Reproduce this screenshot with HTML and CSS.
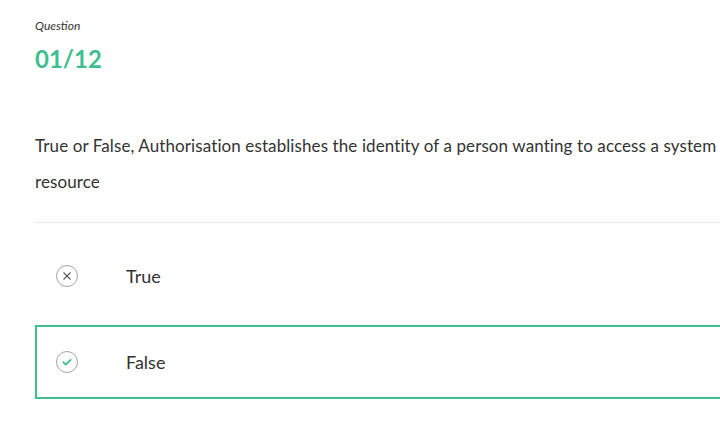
FILE: index.html
```html
<!DOCTYPE html>
<html lang="en">
<head>
<meta charset="utf-8">
<title>Question 01/12</title>
<link rel="stylesheet" href="styles.css">
</head>
<body>
<main class="quiz">
  <div class="label">Question</div>
  <div class="number">01/12</div>
  <p class="prompt">True or False, Authorisation establishes the identity of a person wanting to access a system resource</p>
  <hr class="divider">
  <ul class="options">
    <li class="option">
      <span class="icon">
        <svg width="22" height="22" viewBox="0 0 22 22"><circle cx="11" cy="11" r="10.5" fill="none" stroke="#a3a3a3" stroke-width="1"/><path d="M7.5 7.5 L14.5 14.5 M14.5 7.5 L7.5 14.5" stroke="#555" stroke-width="1.1" fill="none"/></svg>
      </span>
      <span class="text">True</span>
    </li>
    <li class="option selected">
      <span class="icon">
        <svg width="22" height="22" viewBox="0 0 22 22"><circle cx="11" cy="11" r="10.5" fill="none" stroke="#a3a3a3" stroke-width="1"/><path d="M7.3 11.2 L9.8 13.6 L14.6 8.8" stroke="#3fbf8f" stroke-width="1.8" fill="none" stroke-linecap="round" stroke-linejoin="round"/></svg>
      </span>
      <span class="text">False</span>
    </li>
  </ul>
</main>
</body>
</html>
```

FILE: styles.css
```css
html, body {
  margin: 0;
  padding: 0;
  background: #fff;
  overflow: hidden;
}

body {
  font-family: Lato, "Open Sans", sans-serif;
  color: #333;
}

.quiz {
  width: 760px;
  padding: 18px 0 0 35px;
}

.label {
  font-size: 12px;
  font-style: italic;
  line-height: 16px;
  color: #333;
}

.number {
  margin-top: 10px;
  font-size: 24px;
  font-weight: 700;
  line-height: 30px;
  color: #3fbf8f;
}

.prompt {
  margin: 54px 0 0;
  max-width: 700px;
  font-size: 17px;
  line-height: 36px;
  letter-spacing: 0.1px;
  color: #333;
}

.divider {
  margin: 22px 0 0;
  border: 0;
  height: 1px;
  background: #e9e9e9;
}

.options {
  list-style: none;
  margin: 16px 0 0;
  padding: 0;
  display: flex;
  flex-direction: column;
  gap: 12px;
}

.option {
  display: flex;
  align-items: center;
  height: 74px;
  box-sizing: border-box;
  border: 2px solid transparent;
  padding-left: 19px;
}

.option.selected {
  border-color: #3fbf8f;
}

.icon {
  display: flex;
  width: 22px;
  height: 22px;
}

.text {
  margin-left: 48px;
  font-size: 18px;
  color: #333;
}
```
